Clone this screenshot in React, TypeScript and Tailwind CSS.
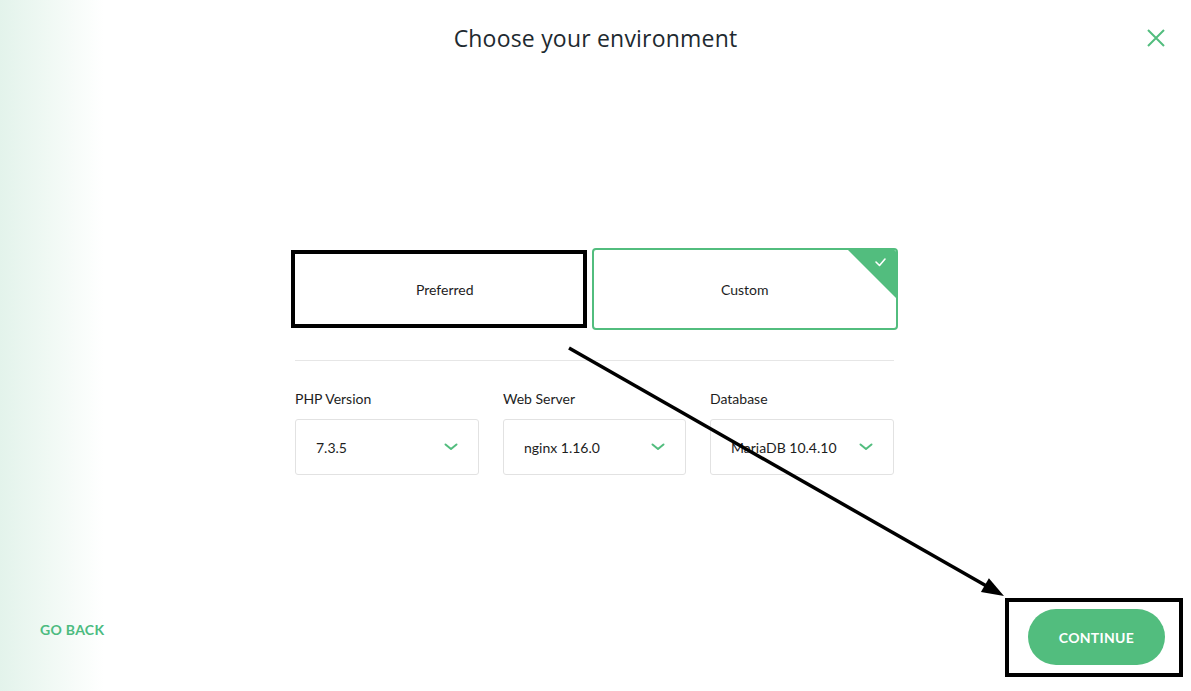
import React, { useState } from "react";

const GREEN = "#52bd7e";

const Chevron = () => (
  <svg width="14" height="8" viewBox="0 0 14 8" fill="none">
    <path d="M1.5 1.5 L7 6 L12.5 1.5" stroke={GREEN} strokeWidth="2" strokeLinecap="round" strokeLinejoin="round" />
  </svg>
);

const SelectBox = ({ label, value }: { label: string; value: string }) => (
  <div className="flex flex-col">
    <div className="text-[14px] text-[#1d1d1d] leading-[18px] mb-[11px]">{label}</div>
    <div className="h-[56px] border border-[#e2e2e2] rounded-[3px] flex items-center justify-between pl-[20px] pr-[20px] bg-white">
      <span className="text-[14px] text-[#1d1d1d]">{value}</span>
      <Chevron />
    </div>
  </div>
);

export default function App() {
  const [env, setEnv] = useState<"preferred" | "custom">("custom");

  return (
    <div
      className="relative w-full h-[691px] flex flex-col bg-[linear-gradient(to_right,#e3f3eb_0px,#f3faf6_60px,#ffffff_104px)] overflow-hidden"
      style={{ fontFamily: "Lato, 'Open Sans', sans-serif" }}
    >
      <div className="grid grid-cols-[1fr_auto_1fr] items-center pt-[22px]">
        <div />
        <h1
          className="text-[23px] text-[#1e2a30] leading-[32px] tracking-[0.2px]"
          style={{ fontFamily: "'Open Sans', sans-serif" }}
        >
          Choose your environment
        </h1>
        <div className="flex justify-end pr-[23px]">
          <button className="p-[2px]">
            <svg width="20" height="20" viewBox="0 0 20 20" fill="none">
              <path d="M2 2 L18 18 M18 2 L2 18" stroke={GREEN} strokeWidth="2" />
            </svg>
          </button>
        </div>
      </div>

      <div className="w-[607px] mx-auto mt-[194px] ml-[291px]">
        <div className="flex items-center gap-[5px]">
          <button
            onClick={() => setEnv("preferred")}
            className="w-[296px] h-[78px] border-[4px] border-black bg-white flex items-center justify-center pl-[12px] text-[14px] text-[#1d1d1d]"
          >
            Preferred
          </button>
          <button
            onClick={() => setEnv("custom")}
            className="relative w-[307px] h-[82px] border-2 border-[#52bd7e] rounded-[4px] bg-white flex items-center justify-center text-[14px] text-[#1d1d1d] overflow-hidden"
          >
            Custom
            {env === "custom" && (
              <svg className="absolute top-0 right-0" width="48" height="48" viewBox="0 0 48 48">
                <polygon points="0,0 48,0 48,48" fill={GREEN} />
                <path d="M28 12 L31.5 15.5 L37 9" stroke="white" strokeWidth="1.6" fill="none" strokeLinecap="round" strokeLinejoin="round" />
              </svg>
            )}
          </button>
        </div>

        <div className="mx-[4px] mt-[30px] border-t border-[#e6e6e6]" />

        <div className="mx-[4px] mt-[29px] grid grid-cols-[184px_183px_184px] gap-x-[24px]">
          <SelectBox label="PHP Version" value="7.3.5" />
          <SelectBox label="Web Server" value="nginx 1.16.0" />
          <SelectBox label="Database" value="MariaDB 10.4.10" />
        </div>
      </div>

      <div className="mt-auto flex justify-between items-start pl-[40px] pr-[8px] pb-[14px]">
        <button className="mt-[21px] text-[14px] font-bold text-[#4cbb80] tracking-[0.3px]">GO BACK</button>
        <div className="w-[178px] h-[79px] border-[4px] border-black pl-[19px] pt-[7px]">
          <button
            className="w-[137px] h-[56px] rounded-full bg-[#52bd7e] text-white text-[14px] font-bold tracking-[0.3px]"
          >
            CONTINUE
          </button>
        </div>
      </div>

      <svg className="absolute inset-0 pointer-events-none" width="1191" height="691">
        <line x1="569" y1="348" x2="990" y2="588" stroke="black" strokeWidth="3.5" />
        <polygon points="1004,596 980.9,592.1 988.9,578.2" fill="black" />
      </svg>
    </div>
  );
}
